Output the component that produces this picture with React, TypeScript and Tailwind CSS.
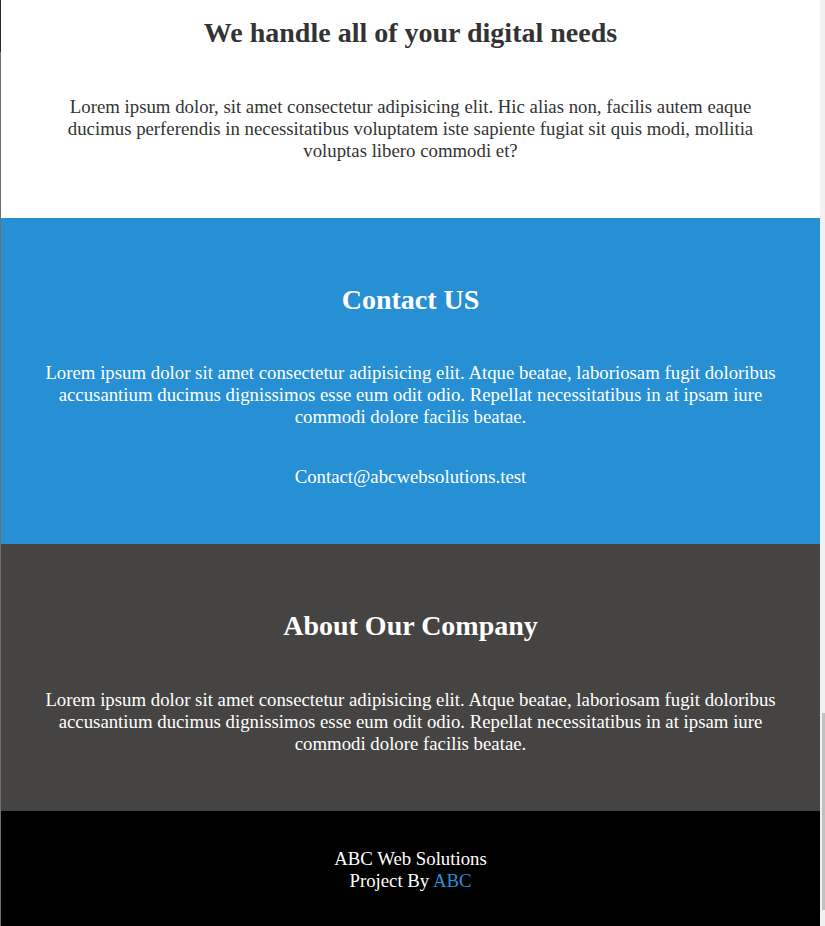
export default function App() {
  return (
    <div className="flex w-[825px] min-h-[926px] bg-white font-['Liberation_Serif',serif]">
      {/* left edge strip */}
      <div className="flex w-px flex-col">
        <div className="h-[52px] bg-[#2b2b2b]" />
        <div className="flex-1 bg-[#6f6f6f]" />
      </div>

      <main className="flex w-[819px] flex-col">
        <section className="h-[218px] bg-white px-[60px] pt-[17px] text-center text-[#333333]">
          <h2 className="text-[28px] font-bold leading-[32px]">We handle all of your digital needs</h2>
          <p className="mt-[47px] text-[18.8px] leading-[22px]">
            Lorem ipsum dolor, sit amet consectetur adipisicing elit. Hic alias non, facilis autem eaque
            ducimus perferendis in necessitatibus voluptatem iste sapiente fugiat sit quis modi, mollitia
            voluptas libero commodi et?
          </p>
        </section>

        <section className="h-[326px] bg-[#2790d4] px-[40px] pt-[66px] text-center text-white">
          <h2 className="text-[28px] font-bold leading-[32px]">Contact US</h2>
          <p className="mt-[46px] text-[18.8px] leading-[22px]">
            Lorem ipsum dolor sit amet consectetur adipisicing elit. Atque beatae, laboriosam fugit doloribus
            accusantium ducimus dignissimos esse eum odit odio. Repellat necessitatibus in at ipsam iure
            commodi dolore facilis beatae.
          </p>
          <p className="mt-[38px] text-[18.8px] leading-[22px]">Contact@abcwebsolutions.test</p>
        </section>

        <section className="h-[267px] bg-[#464442] px-[40px] pt-[66px] text-center text-white">
          <h2 className="text-[28px] font-bold leading-[32px]">About Our Company</h2>
          <p className="mt-[47px] text-[18.8px] leading-[22px]">
            Lorem ipsum dolor sit amet consectetur adipisicing elit. Atque beatae, laboriosam fugit doloribus
            accusantium ducimus dignissimos esse eum odit odio. Repellat necessitatibus in at ipsam iure
            commodi dolore facilis beatae.
          </p>
        </section>

        <footer className="flex-1 bg-black pt-[37px] pb-[34px] text-center text-[18.8px] leading-[22px] text-white">
          <p>ABC Web Solutions</p>
          <p>
            Project By <a className="text-[#2790d4]">ABC</a>
          </p>
        </footer>
      </main>

      {/* scrollbar */}
      <div className="flex w-[5px] flex-col bg-[#f1f1f1]">
        <div className="h-[713px]" />
        <div className="ml-[2px] h-[197px] w-[3px] bg-[#c1c1c1]" />
      </div>
    </div>
  );
}
